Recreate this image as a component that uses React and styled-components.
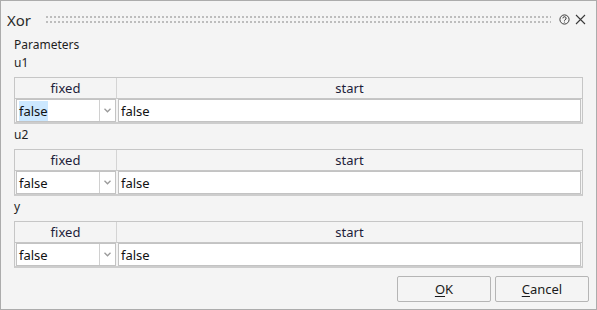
import React from "react";
import styled, { createGlobalStyle } from "styled-components";

const Global = createGlobalStyle`
  html, body {
    margin: 0;
    padding: 0;
    background: #f4f4f4;
  }
  body {
    font-family: "Noto Sans", "Liberation Sans", sans-serif;
  }
`;

const Dialog = styled.div`
    width: 597px;
    height: 310px;
    box-sizing: border-box;
    border: 1px solid #acacac;
    background: #f4f4f4;
    display: flex;
    flex-direction: column;
    color: #1e1e1e;
  `,
  TitleBar = styled.div`
    height: 35px;
    box-sizing: border-box;
    padding: 2px 10px 0 6px;
    display: flex;
    align-items: center;
  `,
  Title = styled.div`
    font-size: 15px;
    color: #2b2b2b;
  `,
  Grip = styled.div`
    flex: 1;
    height: 7px;
    margin: 0 8px 0 15px;
    background-image: linear-gradient(90deg, #bdbdbd 2px, transparent 2px),
      linear-gradient(90deg, #bdbdbd 2px, transparent 2px);
    background-size: 4px 2px, 4px 2px;
    background-position: 0 0, 0 5px;
    background-repeat: repeat-x;
  `,
  TitleIcons = styled.div`
    display: flex;
    align-items: center;
    gap: 5px;
  `,
  Body = styled.div`
    flex: 1;
    padding: 0 13px;
    font-size: 12px;
  `,
  Label = styled.div`
    height: 18px;
    line-height: 18px;
    margin-bottom: ${(p) => (p.$tight ? 0 : 5)}px;
    color: #1e1e1e;
  `,
  Table = styled.div`
    display: grid;
    grid-template-columns: 102px 1fr;
    height: 47px;
    box-sizing: border-box;
    border: 1px solid #c6c6c6;
    border-bottom-width: 2px;
    border-bottom-color: #cdcdcd;
    margin-bottom: 2px;
    font-size: 13px;
  `,
  HeadCell = styled.div`
    height: 21px;
    box-sizing: border-box;
    line-height: 20px;
    text-align: center;
    color: #1d1d3a;
    border-bottom: 1px solid #c6c6c6;
    border-right: ${(p) => (p.$last ? "none" : "1px solid #d4d4d4")};
  `,
  DataCell = styled.div`
    padding: 0 1px;
    height: 23px;
    display: flex;
  `,
  Field = styled.div`
    flex: 1;
    display: flex;
    align-items: center;
    box-sizing: border-box;
    height: 23px;
    border: 1px solid #c3c3c3;
    background: #ffffff;
    padding-left: 2px;
    color: #111;
  `,
  Value = styled.span`
    flex: 1;
    span {
      background: ${(p) => (p.$selected ? "#cce8ff" : "transparent")};
      padding: 1px 0;
    }
  `,
  Arrow = styled.div`
    width: 15px;
    align-self: stretch;
    border-left: 1px solid #d0d0d0;
    display: flex;
    align-items: center;
    justify-content: center;
  `,
  Footer = styled.div`
    display: flex;
    justify-content: flex-end;
    gap: 4px;
    padding: 0 7px 7px 0;
  `,
  Button = styled.button`
    width: 94px;
    height: 26px;
    box-sizing: border-box;
    border: 1px solid #b5b5b5;
    border-radius: 2px;
    background: #f4f4f4;
    font-family: "Noto Sans", "Liberation Sans", sans-serif;
    font-size: 13px;
    color: #1a1a1a;
    padding: 0;
    u {
      text-decoration-thickness: 1px;
      text-underline-offset: 2px;
    }
  `;

const HelpIcon = () => (
  <svg width="11" height="11" viewBox="0 0 11 11">
    <circle cx="5.5" cy="5.5" r="4.6" fill="none" stroke="#3a3a3a" strokeWidth="1" />
    <path d="M3.9 4.3a1.6 1.6 0 1 1 2.2 1.5c-.5.2-.6.5-.6 1" fill="none" stroke="#3a3a3a" strokeWidth="1" />
    <circle cx="5.5" cy="8" r="0.6" fill="#3a3a3a" />
  </svg>
);

const CloseIcon = () => (
  <svg width="11" height="11" viewBox="0 0 11 11">
    <path d="M1 1L10 10M10 1L1 10" stroke="#3a3a3a" strokeWidth="1.1" />
  </svg>
);

const ChevronDown = () => (
  <svg width="7" height="5" viewBox="0 0 7 5">
    <path d="M0.5 0.8L3.5 3.8L6.5 0.8" fill="none" stroke="#9a9a9a" strokeWidth="1.3" />
  </svg>
);

const params = [
  { name: "u1", selected: true },
  { name: "u2" },
  { name: "y" },
];

function ParamTable({ param }) {
  return (
    <>
      <Label>{param.name}</Label>
      <Table>
        <HeadCell>fixed</HeadCell>
        <HeadCell $last>start</HeadCell>
        <DataCell>
          <Field>
            <Value $selected={param.selected}>
              <span>false</span>
            </Value>
            <Arrow>
              <ChevronDown />
            </Arrow>
          </Field>
        </DataCell>
        <DataCell>
          <Field>
            <Value>
              <span>false</span>
            </Value>
          </Field>
        </DataCell>
      </Table>
    </>
  );
}

export default function App() {
  return (
    <>
      <Global />
      <Dialog>
        <TitleBar>
          <Title>Xor</Title>
          <Grip />
          <TitleIcons>
            <HelpIcon />
            <CloseIcon />
          </TitleIcons>
        </TitleBar>
        <Body>
          <Label $tight>Parameters</Label>
          {params.map((p) => (
            <ParamTable key={p.name} param={p} />
          ))}
        </Body>
        <Footer>
          <Button>
            <u>O</u>K
          </Button>
          <Button>
            <u>C</u>ancel
          </Button>
        </Footer>
      </Dialog>
    </>
  );
}
